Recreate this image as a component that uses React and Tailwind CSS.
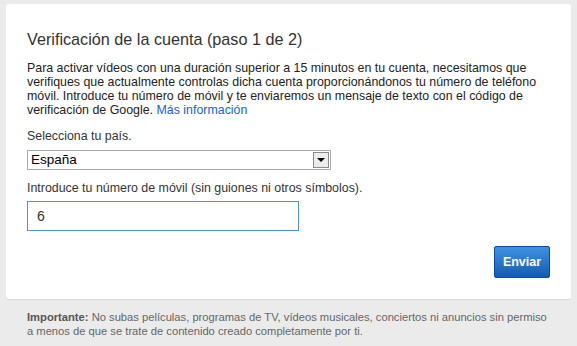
export default function App() {
  return (
    <div className="min-h-[346px] w-[577px] bg-[#ebebeb] pt-[4px] font-['Liberation_Sans',Arial,sans-serif]">
      {/* Tarjeta principal */}
      <div className="mx-[6px] h-[295px] rounded-[3px] bg-white px-[21px] pt-[25px] shadow-[0_1px_1px_rgba(0,0,0,0.08)]">
        <h1 className="text-[16.2px] leading-[20px] text-[#333]">
          Verificación de la cuenta (paso 1 de 2)
        </h1>
        <p className="mt-[12px] whitespace-nowrap text-[12.4px] leading-[14px] text-[#222]">
          Para activar vídeos con una duración superior a 15 minutos en tu cuenta, necesitamos que
          <br />
          verifiques que actualmente controlas dicha cuenta proporcionándonos tu número de teléfono
          <br />
          móvil. Introduce tu número de móvil y te enviaremos un mensaje de texto con el código de
          <br />
          verificación de Google. <a className="text-[#1a5fd0]">Más información</a>
        </p>

        <div className="mt-[11px] text-[12.4px] leading-[16px] text-[#333]">Selecciona tu país.</div>
        <div className="mt-[6px] flex h-[20px] w-[304px] items-center border border-[#a9a9a9] bg-white">
          <span className="flex-1 pl-[3px] text-[13.5px] leading-[18px] text-black">España</span>
          <span className="mr-[1px] flex h-[16px] w-[16px] items-center justify-center border border-[#8a8a8a] bg-[#ececec]">
            <span className="h-0 w-0 border-x-[4px] border-t-[4px] border-x-transparent border-t-black" />
          </span>
        </div>

        <div className="mt-[10px] text-[12.4px] leading-[16px] text-[#333]">
          Introduce tu número de móvil (sin guiones ni otros símbolos).
        </div>
        <div className="mt-[5px] flex h-[30px] w-[272px] items-center border border-[#4d90e6] pl-[9px] text-[14px] text-[#333]">
          6
        </div>

        <div className="mt-[15px] flex justify-end">
          <button className="h-[32px] w-[56px] rounded-[2px] border border-[#0b4a9c] bg-gradient-to-b from-[#3d92e4] to-[#145cb0] text-[12.5px] font-bold text-white">
            Enviar
          </button>
        </div>
      </div>

      {/* Aviso */}
      <p className="mt-[11px] whitespace-nowrap px-[27px] text-[11.2px] leading-[14px] text-[#666]">
        <b className="text-[#555]">Importante:</b> No subas películas, programas de TV, vídeos musicales, conciertos ni anuncios sin permiso
        <br />
        a menos de que se trate de contenido creado completamente por ti.
      </p>
    </div>
  );
}
